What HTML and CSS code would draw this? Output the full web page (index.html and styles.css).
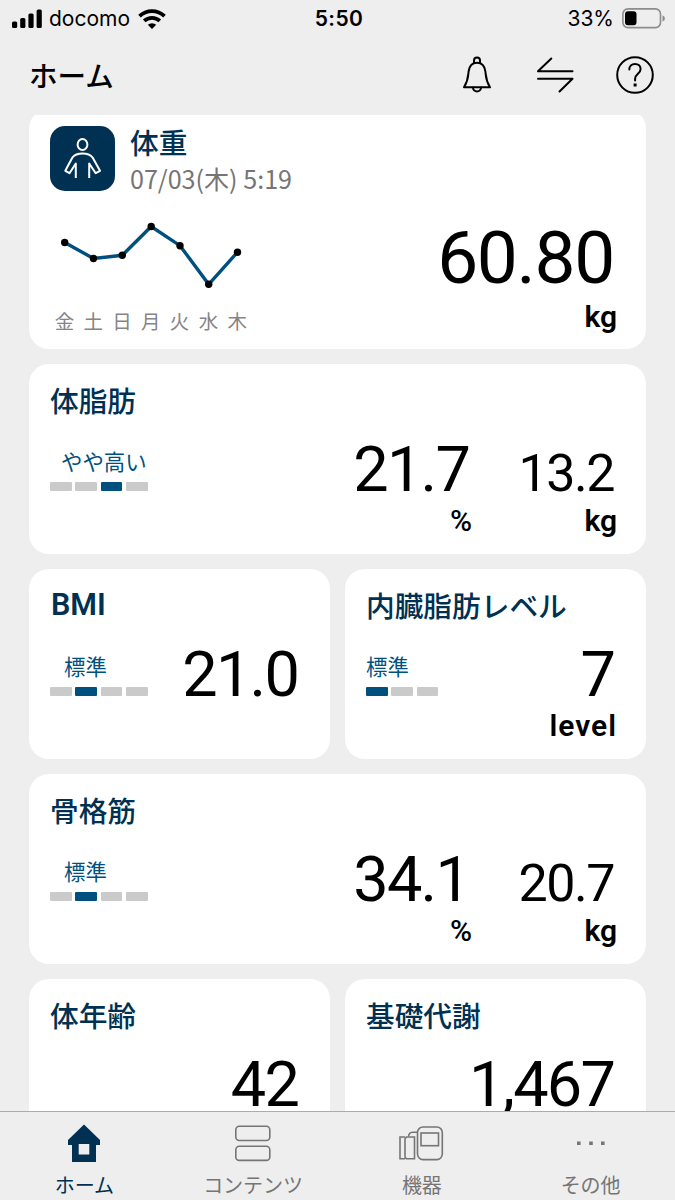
FILE: index.html
```html
<!DOCTYPE html>
<html lang="ja">
<head>
  <meta charset="UTF-8" />
  <meta name="viewport" content="width=device-width, initial-scale=1" />
  <title>ホーム</title>
  <link rel="stylesheet" href="styles.css">
</head>
<body>
  <div class="app">
    <div class="status-bar">
      <div class="status-left">
        <svg width="31" height="20" viewBox="0 0 31 20">
          <rect x="0" y="12.5" width="5.2" height="6.5" rx="1.5"/>
          <rect x="8.2" y="9" width="5.2" height="10" rx="1.5"/>
          <rect x="16.4" y="4.5" width="5.2" height="14.5" rx="1.5"/>
          <rect x="24.6" y="0.5" width="5.2" height="18.5" rx="1.5"/>
        </svg>
        <span class="carrier">docomo</span>
        <svg class="wifi" width="28" height="20" viewBox="0 0 28 20">
          <path d="M1.5 7.2a18 18 0 0 1 25 0M6.2 11.9a11.4 11.4 0 0 1 15.6 0" fill="none" stroke="#000" stroke-width="3.7"/>
          <path d="M14 20l-4.2-4.2a6.2 6.2 0 0 1 8.4 0z"/>
        </svg>
      </div>
      <div class="time">5:50</div>
      <div class="status-right">
        <span>33%</span>
        <svg width="44" height="21" viewBox="0 0 44 21">
          <rect x="0.9" y="0.9" width="37.6" height="18.7" rx="5" fill="none" stroke="#8c8c8c" stroke-width="1.6"/>
          <rect x="3" y="3.2" width="11.5" height="14" rx="3"/>
          <path d="M40.5 7.2q2.4 1 2.4 3.2t-2.4 3.2z" fill="#8c8c8c"/>
        </svg>
      </div>
    </div>

    <header>
      <h1>ホーム</h1>
      <div class="header-icons">
        <svg width="30" height="38" viewBox="0 0 30 38">
          <path d="M2 31.3C6.5 24 6 20 6.600 15.500C7.200 10.500 10 6.700 15 6.700S22.800 10.500 23.400 15.500C24 20 23.500 24 28 31.300Z"/>
          <path d="M12 7V4.500a3 3 0 0 1 6 0V7M11 31.500a4 4 0 0 0 8 0"/>
        </svg>
        <svg width="38" height="38" viewBox="0 0 38 38">
          <path d="M15.300 2.500L2 15.200H36.500M2 22.700H36.500L23.500 35.500"/>
        </svg>
        <svg width="40" height="40" viewBox="0 0 40 40">
          <circle cx="20" cy="20" r="17.800"/>
          <path d="M14.300 14.500c0-3.400 2.400-5.600 5.700-5.600s5.600 2.100 5.600 5.100c0 4.800-5.500 4.600-5.500 9.800v1.700"/>
          <rect class="dot" x="18.600" y="28.500" width="3" height="3"/>
        </svg>
      </div>
    </header>

    <main>
      <section class="card weight">
        <div class="weight-head">
          <div class="weight-icon">
            <svg width="65" height="65" viewBox="0 0 65 65">
              <ellipse cx="32.500" cy="18.500" rx="4.900" ry="5.600"/>
              <path d="M25.800 52V37.500L19.500 47.200L15.300 44.800L22.400 31.500Q25.500 27.500 32.500 27.500T42.600 31.500L50 44.800L45.700 47.200L39.200 37.500V52"/>
            </svg>
          </div>
          <div>
            <h2>体重</h2>
            <div class="date">07/03(木) 5:19</div>
          </div>
        </div>
        <div class="weight-body">
          <div class="chart">
            <svg width="202" height="80" viewBox="0 0 202 80">
              <polyline points="14.700,22.500 43.500,38.500 72.300,35.300 101.200,6.500 130,25.700 158.700,64.300 187.500,32.200"/>
              <circle cx="14.700" cy="22.500" r="3.700"/>
              <circle cx="43.500" cy="38.500" r="3.700"/>
              <circle cx="72.300" cy="35.300" r="3.700"/>
              <circle cx="101.200" cy="6.500" r="3.700"/>
              <circle cx="130" cy="25.700" r="3.700"/>
              <circle cx="158.700" cy="64.300" r="3.700"/>
              <circle cx="187.500" cy="32.200" r="3.700"/>
            </svg>
            <div class="days"><span>金</span><span>土</span><span>日</span><span>月</span><span>火</span><span>水</span><span>木</span></div>
          </div>
          <div class="measure">
            <div class="value large">60.80</div>
            <div class="unit">kg</div>
          </div>
        </div>
      </section>

      <section class="card">
        <h2>体脂肪</h2>
        <div class="card-body">
          <div class="gauge">
            <div class="rating high">やや高い</div>
            <div class="bars"><i></i><i></i><i class="on"></i><i></i></div>
          </div>
          <div class="measure">
            <div class="value">21.7</div>
            <div class="unit percent">%</div>
          </div>
          <div class="measure second">
            <div class="value small">13.2</div>
            <div class="unit">kg</div>
          </div>
        </div>
      </section>

      <div class="row">
        <section class="card">
          <h2 class="latin">BMI</h2>
          <div class="card-body">
            <div class="gauge">
              <div class="rating mid">標準</div>
              <div class="bars"><i></i><i class="on"></i><i></i><i></i></div>
            </div>
            <div class="measure">
              <div class="value">21.0</div>
            </div>
          </div>
        </section>
        <section class="card">
          <h2>内臓脂肪レベル</h2>
          <div class="card-body">
            <div class="gauge">
              <div class="rating">標準</div>
              <div class="bars"><i class="on"></i><i></i><i></i></div>
            </div>
            <div class="measure">
              <div class="value">7</div>
              <div class="unit level">level</div>
            </div>
          </div>
        </section>
      </div>

      <section class="card">
        <h2>骨格筋</h2>
        <div class="card-body">
          <div class="gauge">
            <div class="rating mid">標準</div>
            <div class="bars"><i></i><i class="on"></i><i></i><i></i></div>
          </div>
          <div class="measure">
            <div class="value">34.1</div>
            <div class="unit percent">%</div>
          </div>
          <div class="measure second">
            <div class="value small">20.7</div>
            <div class="unit">kg</div>
          </div>
        </div>
      </section>

      <div class="row">
        <section class="card">
          <h2>体年齢</h2>
          <div class="card-body">
            <div class="measure"><div class="value">42</div></div>
          </div>
        </section>
        <section class="card">
          <h2>基礎代謝</h2>
          <div class="card-body">
            <div class="measure"><div class="value">1,467</div></div>
          </div>
        </section>
      </div>
    </main>

    <nav>
      <a class="tab active">
        <svg width="46" height="44" viewBox="0 0 46 44">
          <path fill="#003153" fill-rule="evenodd" d="M23 3.500L39 19V24H35V41H11V24H7V19ZM17.700 23V33.500H28.300V23Z"/>
        </svg>
        <span>ホーム</span>
      </a>
      <a class="tab">
        <svg width="46" height="44" viewBox="0 0 46 44">
          <rect x="5.800" y="5.300" width="34" height="14.200" rx="3.500"/>
          <rect x="5.800" y="25.200" width="34" height="14.200" rx="3.500"/>
        </svg>
        <span>コンテンツ</span>
      </a>
      <a class="tab">
        <svg width="46" height="44" viewBox="0 0 46 44">
          <rect x="18.500" y="6" width="24.800" height="32.600" rx="5.500"/>
          <rect x="22" y="12" width="17.500" height="12.700"/>
          <path d="M6 37.700H1V16H6M9.500 15.500Q10 11.500 13.500 11.300H18.500"/>
          <path d="M7.500 16H15.500V37.700H7.500Q5.500 36.500 6 34.500V19Q5.500 17.500 7.500 16Z"/>
        </svg>
        <span>機器</span>
      </a>
      <a class="tab">
        <svg width="46" height="44" viewBox="0 0 46 44">
          <path class="dots" d="M9 20.500h3.600v3.600h-3.600zM21.200 20.500h3.600v3.600h-3.600zM33 20.500h3.600v3.600h-3.600z"/>
        </svg>
        <span>その他</span>
      </a>
    </nav>
  </div>
</body>
</html>
```

FILE: styles.css
```css
:root {
  --background: #eeeeee;
  --navy: #003153;
  --blue: #00507f;
  --gray: #757575;
}

* {
  box-sizing: border-box;
}

body {
  margin: 0;
  background: var(--background);
  font-family: "Noto Sans CJK JP", sans-serif;
  color: #000;
}

.app {
  width: 675px;
  height: 1200px;
  display: flex;
  flex-direction: column;
  overflow: hidden;
}

/* Status bar */
.status-bar {
  height: 37px;
  flex: none;
  padding: 0 9px 0 12px;
  display: grid;
  grid-template-columns: 1fr auto 1fr;
  align-items: center;
  font-family: Inter, sans-serif;
  font-size: 21px;
}

.status-left,
.status-right {
  display: flex;
  align-items: center;
}

.status-right {
  justify-content: flex-end;
  gap: 8px;
}

.carrier {
  margin-left: 6px;
}

.wifi {
  margin-left: 8px;
}

.time {
  font-weight: 600;
  letter-spacing: 0.4px;
}

/* Header */
header {
  height: 78px;
  flex: none;
  padding: 0 20px 2px 29px;
  display: flex;
  justify-content: space-between;
  align-items: center;
}

h1 {
  margin: 0;
  font-size: 28.5px;
  line-height: 40px;
  font-weight: 500;
}

.header-icons {
  display: flex;
  align-items: center;
  gap: 41px;
}

.header-icons svg {
  fill: none;
  stroke: #000;
  stroke-width: 2;
  stroke-linejoin: round;
  stroke-linecap: round;
}

.header-icons svg:first-child {
  margin-right: 3px;
}

.header-icons .dot {
  fill: #000;
  stroke: none;
}

/* Cards */
main {
  height: 996px;
  flex: none;
  padding: 0 29px;
  display: flex;
  flex-direction: column;
  gap: 15px;
  overflow: hidden;
}

.row {
  flex: none;
  display: grid;
  grid-template-columns: 1fr 1fr;
  gap: 15px;
}

.card {
  height: 190px;
  flex: none;
  padding: 20px 29px 0 21px;
  background: #fff;
  border-radius: 20px;
}

h2 {
  margin: 0;
  color: var(--navy);
  font-size: 28.7px;
  line-height: 32px;
  font-weight: 500;
}

h2.latin {
  height: 32px;
  padding-left: 1px;
  font-family: Roboto, sans-serif;
  font-size: 30.5px;
  font-weight: 600;
  line-height: 31px;
}

.card-body {
  margin-top: 24px;
  display: flex;
  align-items: flex-start;
}

.gauge {
  padding-top: 6px;
}

.rating {
  color: var(--blue);
  font-size: 21.4px;
  line-height: 30px;
}

.rating.mid {
  padding-left: 14px;
}

.rating.high {
  padding-left: 11px;
}

.bars {
  margin-top: 6px;
  display: flex;
  gap: 3.5px;
}

.bars i {
  width: 21.8px;
  height: 9px;
  border-radius: 1px;
  background: #cacaca;
}

.bars .on {
  background: var(--blue);
}

.measure {
  margin-left: auto;
  display: flex;
  flex-direction: column;
  align-items: flex-end;
  font-family: Roboto, sans-serif;
}

.measure.second {
  width: 145px;
  margin-left: 0;
}

.value {
  height: 60px;
  padding-right: 3px;
  font-size: 63px;
  line-height: 60px;
  letter-spacing: -1.8px;
}

.value.small {
  font-size: 52px;
  line-height: 67px;
  letter-spacing: -1.5px;
}

.value.large {
  height: 76px;
  font-size: 73px;
  line-height: 76px;
  letter-spacing: -1.3px;
}

.unit {
  margin-top: 3px;
  font-size: 30px;
  line-height: 36px;
  font-weight: 600;
}

.unit.percent {
  font-weight: 500;
}

.unit.level {
  letter-spacing: 1px;
}

/* Weight card, scrolled slightly under the header */
.card.weight {
  height: 240px;
  margin-top: -6px;
  padding-top: 17px;
}

.weight-head {
  height: 65px;
  display: flex;
  gap: 15px;
}

.weight-head h2 {
  line-height: 32px;
}

.weight-icon {
  width: 65px;
  height: 65px;
  border-radius: 15px;
  background: var(--navy);
}

.weight-icon svg {
  fill: none;
  stroke: #fff;
  stroke-width: 2;
  stroke-linejoin: round;
}

.date {
  margin-top: 3px;
  color: var(--gray);
  font-size: 25.1px;
  line-height: 34px;
}

.weight-body {
  margin-top: 29px;
  display: flex;
}

.chart svg {
  display: block;
}

.chart polyline {
  fill: none;
  stroke: var(--blue);
  stroke-width: 3.4;
}

.days {
  margin-top: 7px;
  display: flex;
  color: #858585;
  font-size: 19.5px;
  line-height: 28px;
}

.days span {
  width: 28.8px;
  text-align: center;
}

/* Tab bar */
nav {
  height: 89px;
  flex: none;
  display: grid;
  grid-template-columns: repeat(4, 1fr);
  background: var(--background);
  border-top: 1px solid #a9acab;
}

.tab {
  padding-top: 9px;
  display: flex;
  flex-direction: column;
  align-items: center;
  color: var(--gray);
  font-size: 20px;
  line-height: 28px;
}

.tab svg {
  flex: none;
  margin-bottom: 6px;
  fill: none;
  stroke: var(--gray);
  stroke-width: 1.6;
}

.tab .dots {
  fill: var(--gray);
  stroke: none;
}

.tab.active {
  color: var(--navy);
}

.tab.active svg {
  stroke: none;
}
```
